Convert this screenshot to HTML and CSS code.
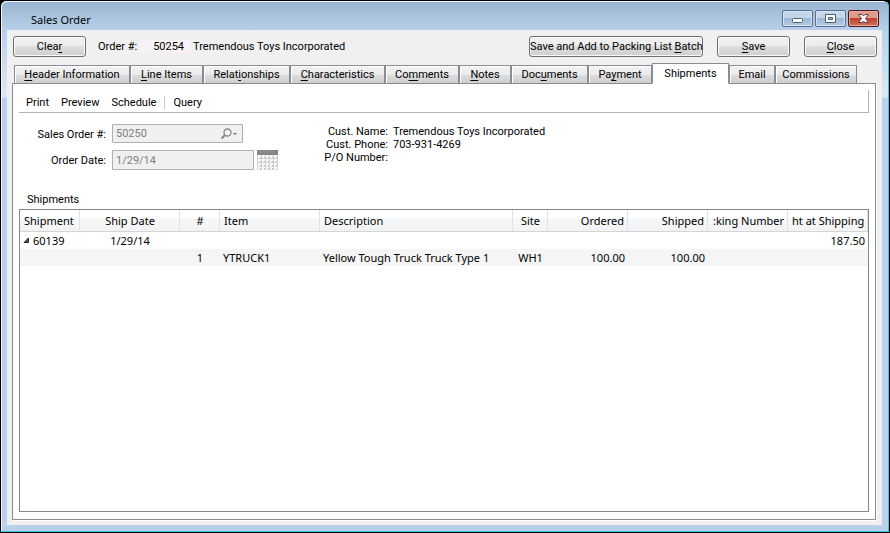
FILE: index.html
```
<!DOCTYPE html>
<html lang="en">
<head>
<meta charset="utf-8">
<title>Sales Order</title>
<link rel="stylesheet" href="styles.css">
</head>
<body>
<div class="window">
  <header class="titlebar">
    <h1 class="title">Sales Order</h1>
    <div class="controls">
      <button class="control" aria-label="Minimize"><svg width="30" height="16" viewBox="0 0 30 16"><rect x="10.500" y="8.500" width="10" height="4" rx="1" fill="#fff" stroke="#535d6e"/></svg></button>
      <button class="control" aria-label="Maximize"><svg width="30" height="16" viewBox="0 0 30 16"><path d="M10.500 4.500h10v8h-10zM13.500 7.500v2h4v-2z" fill="#fff" fill-rule="evenodd" stroke="#535d6e"/></svg></button>
      <button class="control control-close" aria-label="Close window"><svg width="30" height="16" viewBox="0 0 30 16"><path d="M10.500 4.500h3.500l1.500 1.500 1.500-1.500h3.500l-3 4 3 4H17l-1.500-1.500-1.500 1.500h-3.500l3-4z" fill="#fff" stroke="#6b4149"/></svg></button>
    </div>
  </header>
  <main class="client">
    <div class="actions">
      <button class="button">Clea<u>r</u></button>
      <span class="order-label">Order #:</span>
      <span class="order-number">50254</span>
      <span class="order-customer">Tremendous Toys Incorporated</span>
      <button class="button button-wide">Save and Add to Packing List <u>B</u>atch</button>
      <button class="button"><u>S</u>ave</button>
      <button class="button"><u>C</u>lose</button>
    </div>
    <div class="tabs" role="tablist">
      <button class="tab" role="tab"><u>H</u>eader Information</button>
      <button class="tab" role="tab"><u>L</u>ine Items</button>
      <button class="tab" role="tab">Relat<u>i</u>onships</button>
      <button class="tab" role="tab"><u>C</u>haracteristics</button>
      <button class="tab" role="tab">Co<u>m</u>ments</button>
      <button class="tab" role="tab"><u>N</u>otes</button>
      <button class="tab" role="tab">Doc<u>u</u>ments</button>
      <button class="tab" role="tab">Pa<u>y</u>ment</button>
      <button class="tab tab-active" role="tab" aria-selected="true">Shipments</button>
      <button class="tab" role="tab">Email</button>
      <button class="tab" role="tab">Commissions</button>
    </div>
    <section class="pane">
      <div class="toolbar">
        <button class="tool">Print</button>
        <button class="tool">Preview</button>
        <button class="tool">Schedule</button>
        <span class="separator"></span>
        <button class="tool">Query</button>
      </div>
      <div class="details">
        <div class="form">
          <label for="order">Sales Order #:</label>
          <div class="field field-order">
            <input id="order" value="50250" disabled>
            <svg class="search" width="18" height="12" viewBox="0 0 18 12"><circle cx="7.500" cy="4.500" r="3.500" fill="#f4f4f4" stroke="#858585" stroke-width="1.300"/><path d="M5 7 1.500 10.500" stroke="#858585" stroke-width="2"/><path d="M13 5h4l-2 2z" fill="#777"/></svg>
          </div>
          <label for="date">Order Date:</label>
          <div class="date-row">
            <div class="field field-date"><input id="date" value="1/29/14" disabled></div>
            <button class="calendar" aria-label="Pick a date"><svg width="21" height="20" viewBox="0 0 21 20"><path d="M0 0h21v20H0z" fill="#d2d2d2"/><path d="M0 0h21v5H0z" fill="#858585"/><path d="M3 2h15" stroke="#999" stroke-dasharray="2 1"/><path d="M1 6.500h19M1 10.500h19M1 14.500h19M1 18h19" stroke="#f8f8f8" stroke-width="3" stroke-dasharray="3 1"/><path d="M3 7.500h17M3 11.500h17M3 15.500h17M3 18.500h14" stroke="#b4b4b4" stroke-dasharray="1 3"/></svg></button>
          </div>
        </div>
        <dl class="customer">
          <dt>Cust. Name:</dt><dd>Tremendous Toys Incorporated</dd>
          <dt>Cust. Phone:</dt><dd>703-931-4269</dd>
          <dt>P/O Number:</dt><dd></dd>
        </dl>
      </div>
      <h2 class="list-title">Shipments</h2>
      <div class="list">
        <table>
          <colgroup><col class="c60"><col class="c100"><col class="c40"><col class="c100"><col><col class="c35"><col class="c80"><col class="c80"><col class="c80"><col class="c80"></colgroup>
          <thead>
            <tr><th>Shipment</th><th class="center">Ship Date</th><th class="center">#</th><th>Item</th><th>Description</th><th class="center">Site</th><th class="num">Ordered</th><th class="num">Shipped</th><th class="num">:king Number</th><th class="num">ht at Shipping</th></tr>
          </thead>
          <tbody>
            <tr><td><span class="node"><svg width="7" height="7" viewBox="0 0 7 7"><path d="M5.500 1v4.500H1z" fill="#555" stroke="#262626"/></svg>60139</span></td><td class="center">1/29/14</td><td></td><td></td><td></td><td></td><td></td><td></td><td></td><td class="num">187.50</td></tr>
            <tr><td></td><td></td><td class="center">1</td><td>YTRUCK1</td><td>Yellow Tough Truck Truck Type 1</td><td class="center">WH1</td><td class="num">100.00</td><td class="num">100.00</td><td></td><td></td></tr>
          </tbody>
        </table>
      </div>
    </section>
  </main>
</div>
</body>
</html>
```
FILE: styles.css
```
* { box-sizing: border-box; }
body {
  margin: 0;
  background: #000;
  color: #000;
  font: 11px/13px Roboto, "Liberation Sans", sans-serif;
}
button, input { font: inherit; color: inherit; margin: 0; padding: 0; }
button { white-space: nowrap; }
u { text-underline-offset: 2px; }
.window {
  display: flex;
  flex-direction: column;
  height: calc(100vh - 1px);
  margin-right: 1px;
  padding: 0 6px 6px;
  border: 1px solid #000;
  border-right-color: #35c7dd;
  border-bottom-color: #35c7dd;
  border-radius: 6px 6px 0 0;
  background: linear-gradient(#99b4d1 0, #b9d1ea 30px, #dce8f6 96px, #b9d1ea 97px);
  box-shadow: inset 1px 1px #eef4fb;
}
.titlebar { display: flex; justify-content: space-between; height: 29px; flex: none; }
.title { margin: 0; padding: 11px 0 0 24px; font: 11px/15px "Noto Sans", sans-serif; }
.controls { display: flex; gap: 2px; padding: 9px 3px 0 0; }
.control {
  width: 31px;
  height: 17px;
  overflow: hidden;
  border: 1px solid #596f8d;
  border-radius: 2px;
  background: linear-gradient(#c4d6ea 50%, #9db8d5 50%, #b5cde6);
  box-shadow: inset 0 0 0 1px #d5e3f2;
}
.control svg { display: block; margin: -1px 0 0 -1px; }
.control-close {
  border-color: #4c1520;
  background: linear-gradient(#dd9c8d 50%, #bd422c 50%, #d0745b);
  box-shadow: inset 0 0 0 1px #e7ada0;
}
.client {
  flex: 1;
  display: flex;
  flex-direction: column;
  min-height: 0;
  padding: 6px 6px 5px 5px;
  background: #f0f0f0;
}
.actions { display: flex; align-items: center; margin: 0 -1px 0 1px; }
.button {
  min-width: 73px;
  height: 21px;
  border: 1px solid #707070;
  border-radius: 3px;
  background: linear-gradient(#f2f2f2, #ebebeb 50%, #ddd 50%, #cfcfcf);
  box-shadow: inset 0 0 0 1px #fafafa;
}
.button + .button { margin-left: 14px; }
.button-wide { width: 174px; margin-left: auto; }
.order-label { margin-left: 12px; }
.order-number { margin-left: 2px; padding: 0 7px 0 14px; background: #f7f2f5; }
.order-customer { margin-left: 2px; }
.tabs {
  display: grid;
  grid-template-columns: 116px 73px 87px 95px 74px 52px 77px 64px 77px 46px 82px;
  align-items: end;
  height: 21px;
  margin: 6px 0 -1px 2px;
  position: relative;
}
.tab {
  height: 19px;
  border: 1px solid #898c95;
  background: linear-gradient(#f2f2f2, #ebebeb 50%, #ddd 50%, #cfcfcf);
  box-shadow: inset 1px 1px #fff;
}
.tab-active { height: 21px; border-bottom-color: #fff; background: #fff; }
.pane {
  flex: 1;
  display: flex;
  flex-direction: column;
  min-height: 0;
  padding: 6px;
  border: 1px solid #898c95;
  background: #fff;
  box-shadow: 1px 1px #fff;
}
.toolbar {
  display: flex;
  align-items: center;
  height: 23px;
  padding: 2px 7px 0;
  gap: 12px;
  border: 0 solid #b4b4b4;
  border-width: 0 1px 1px 0;
}
.tool { border: 0; background: none; }
.separator { width: 1px; height: 13px; margin: 0 -4px; background: #c8c8c8; }
.details { display: flex; gap: 44px; padding-top: 11px; }
.form {
  display: grid;
  grid-template-columns: 87px auto;
  gap: 7px 6px;
  align-items: center;
}
.form label { padding-top: 1px; text-align: right; }
.field {
  display: flex;
  align-items: center;
  height: 20px;
  padding: 0 4px 0 3px;
  border: 1px solid #afafaf;
  border-radius: 1px;
  background: #f0f0f0;
}
.field-order { width: 131px; height: 19px; }
.field-date { width: 142px; }
.field input { flex: 1; min-width: 0; border: 0; background: none; color: #808080; }
.search { flex: none; }
.date-row { display: flex; gap: 3px; }
.calendar { border: 0; background: none; height: 20px; }
.calendar svg { display: block; }
.customer { display: grid; grid-template-columns: 66px auto; column-gap: 5px; align-content: start; margin: 0; padding-top: 1px; }
.customer dt { text-align: right; white-space: nowrap; }
.customer dd { margin: 0; }
.list-title { margin: 23px 0 3px 8px; font-size: 11px; font-weight: 400; line-height: 13px; }
.list { flex: 1; min-height: 0; margin-bottom: 1px; border: 1px solid #828790; }
table { width: 100%; table-layout: fixed; border-collapse: separate; border-spacing: 0; font: 11px/16px "Noto Sans", sans-serif; }
.c35 { width: 35px; }
.c40 { width: 40px; }
.c60 { width: 60px; }
.c80 { width: 80px; }
.c100 { width: 100px; }
th, td { padding: 0 3px 0 4px; text-align: left; white-space: nowrap; font-weight: 400; }
td { height: 17px; padding-left: 3px; }
th {
  height: 22px;
  border-right: 1px solid #e0e2e5;
  border-bottom: 1px solid #d5d5d5;
  background: linear-gradient(#fff 40%, #f7f8fa 40%, #f1f2f4);
}
tbody tr:nth-child(even) { background: #f5f5f5; }
th.center, td.center { text-align: center; }
th.num, td.num { text-align: right; }
.node { display: flex; align-items: center; gap: 3px; }
```
